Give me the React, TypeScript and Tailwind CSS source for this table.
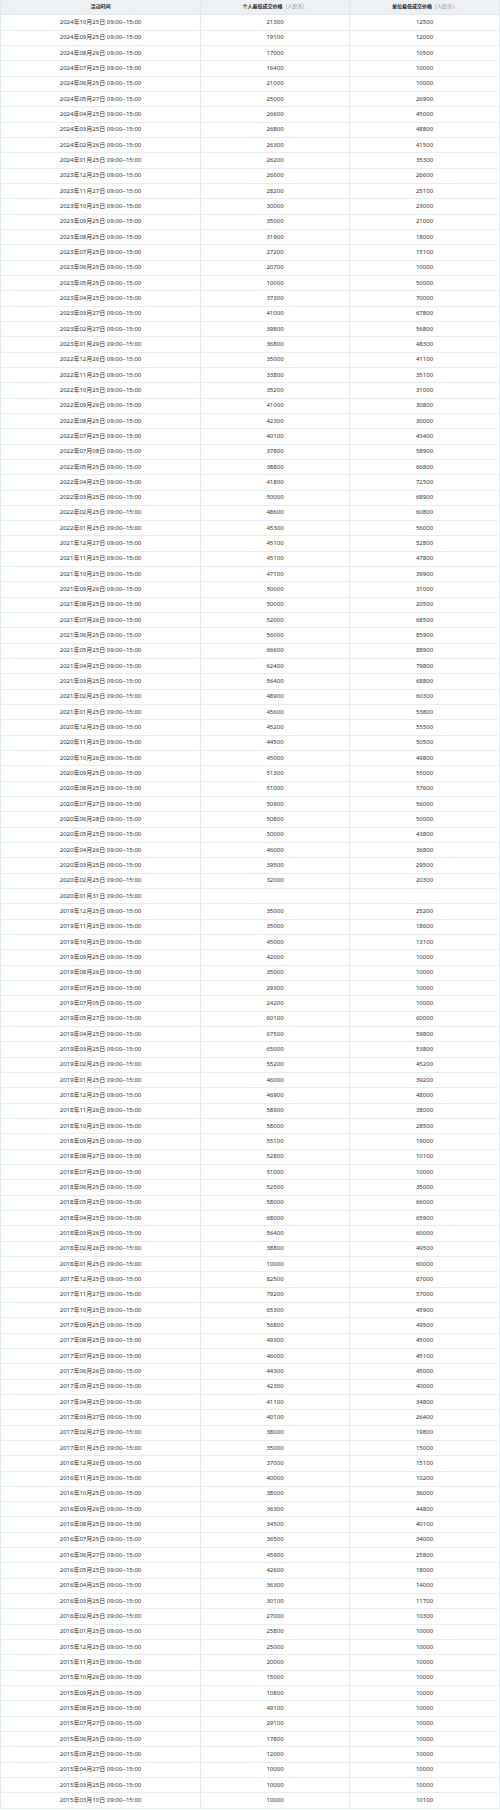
import React from 'react';

type Row = [string, string, string];

// 活动时间 / 个人 / 单位
const rows: Row[] = [
  ['2024年10月25日', '21300', '12500'],
  ['2024年09月25日', '19100', '12000'],
  ['2024年08月26日', '17000', '10500'],
  ['2024年07月25日', '16400', '10000'],
  ['2024年06月25日', '21000', '10000'],
  ['2024年05月27日', '25000', '26900'],
  ['2024年04月25日', '26600', '45000'],
  ['2024年03月25日', '26800', '48800'],
  ['2024年02月26日', '26300', '41500'],
  ['2024年01月25日', '26200', '35300'],
  ['2023年12月25日', '26600', '26600'],
  ['2023年11月27日', '28200', '25100'],
  ['2023年10月25日', '30000', '23000'],
  ['2023年09月25日', '35000', '21000'],
  ['2023年08月25日', '31900', '18000'],
  ['2023年07月25日', '27200', '15100'],
  ['2023年06月25日', '20700', '10000'],
  ['2023年05月25日', '10000', '50000'],
  ['2023年04月25日', '37300', '70000'],
  ['2023年03月27日', '41000', '67800'],
  ['2023年02月27日', '39800', '56800'],
  ['2023年01月29日', '36800', '48300'],
  ['2022年12月26日', '35000', '41100'],
  ['2022年11月25日', '33800', '35100'],
  ['2022年10月25日', '35200', '31000'],
  ['2022年09月26日', '41000', '30800'],
  ['2022年08月25日', '42300', '30000'],
  ['2022年07月25日', '40100', '43400'],
  ['2022年07月08日', '37800', '58900'],
  ['2022年05月25日', '38800', '66800'],
  ['2022年04月25日', '41800', '72500'],
  ['2022年03月25日', '50000', '68900'],
  ['2022年02月25日', '48600', '60800'],
  ['2022年01月25日', '45300', '56000'],
  ['2021年12月27日', '45100', '52800'],
  ['2021年11月25日', '45100', '47800'],
  ['2021年10月25日', '47100', '39900'],
  ['2021年09月26日', '50000', '31000'],
  ['2021年08月25日', '50000', '20500'],
  ['2021年07月26日', '52000', '68500'],
  ['2021年06月25日', '56000', '85900'],
  ['2021年05月25日', '66600', '88900'],
  ['2021年04月25日', '62400', '79800'],
  ['2021年03月25日', '56400', '68800'],
  ['2021年02月25日', '48900', '60300'],
  ['2021年01月25日', '45600', '53800'],
  ['2020年12月25日', '45200', '55500'],
  ['2020年11月25日', '44500', '50500'],
  ['2020年10月26日', '45000', '49800'],
  ['2020年09月25日', '51300', '55000'],
  ['2020年08月25日', '51000', '57600'],
  ['2020年07月27日', '50900', '56000'],
  ['2020年06月28日', '50800', '50000'],
  ['2020年05月25日', '50000', '43800'],
  ['2020年04月26日', '46000', '36800'],
  ['2020年03月25日', '39500', '29500'],
  ['2020年02月25日', '32000', '20300'],
  ['2020年01月31日', '', ''],
  ['2019年12月25日', '35000', '25200'],
  ['2019年11月25日', '35000', '18600'],
  ['2019年10月25日', '45000', '13100'],
  ['2019年09月25日', '42000', '10000'],
  ['2019年08月26日', '35000', '10000'],
  ['2019年07月25日', '29300', '10000'],
  ['2019年07月05日', '24200', '10000'],
  ['2019年05月27日', '60100', '60000'],
  ['2019年04月25日', '67500', '59800'],
  ['2019年03月25日', '65000', '53800'],
  ['2019年02月25日', '55200', '45200'],
  ['2019年01月25日', '46000', '39200'],
  ['2018年12月25日', '46900', '48000'],
  ['2018年11月26日', '58900', '38000'],
  ['2018年10月25日', '58000', '28500'],
  ['2018年09月25日', '55100', '19000'],
  ['2018年08月27日', '52800', '10100'],
  ['2018年07月25日', '51000', '10000'],
  ['2018年06月25日', '52500', '35000'],
  ['2018年05月25日', '58000', '66000'],
  ['2018年04月25日', '68000', '65900'],
  ['2018年03月26日', '56400', '60000'],
  ['2018年02月26日', '38800', '49500'],
  ['2018年01月25日', '10000', '60000'],
  ['2017年12月25日', '82500', '67000'],
  ['2017年11月27日', '79200', '57000'],
  ['2017年10月25日', '65300', '45900'],
  ['2017年09月25日', '56800', '49500'],
  ['2017年08月25日', '49300', '45000'],
  ['2017年07月25日', '46000', '45100'],
  ['2017年06月26日', '44300', '45000'],
  ['2017年05月25日', '42300', '40000'],
  ['2017年04月25日', '41100', '34800'],
  ['2017年03月27日', '40100', '26400'],
  ['2017年02月27日', '38000', '19800'],
  ['2017年01月25日', '35000', '15000'],
  ['2016年12月26日', '37000', '15100'],
  ['2016年11月25日', '40000', '10200'],
  ['2016年10月25日', '38000', '36000'],
  ['2016年09月26日', '36300', '44800'],
  ['2016年08月25日', '34500', '40100'],
  ['2016年07月25日', '36500', '34000'],
  ['2016年06月27日', '45900', '25800'],
  ['2016年05月25日', '42600', '18000'],
  ['2016年04月25日', '36300', '14000'],
  ['2016年03月25日', '30100', '11700'],
  ['2016年02月25日', '27000', '10300'],
  ['2016年01月25日', '25800', '10000'],
  ['2015年12月25日', '25000', '10000'],
  ['2015年11月25日', '20000', '10000'],
  ['2015年10月26日', '15000', '10000'],
  ['2015年09月25日', '10800', '10000'],
  ['2015年08月25日', '49100', '10000'],
  ['2015年07月27日', '29100', '10000'],
  ['2015年06月25日', '17800', '10000'],
  ['2015年05月25日', '12000', '10000'],
  ['2015年04月27日', '10000', '10000'],
  ['2015年03月25日', '10000', '10000'],
  ['2015年03月10日', '10000', '10100'],
];

const cell = 'flex items-center justify-center border-r border-[#dfe9f0]';

export default function App() {
  return (
    <div className="w-[500px] bg-white text-[#333] font-['Noto_Sans','Noto_Sans_CJK_SC',sans-serif]">
      {/* 表头 */}
      <div className="grid grid-cols-[201px_149px_1fr] h-[15.34px] bg-[#eef0f2] border-b border-[#dfe9f0] text-[5px] font-bold text-[#222]">
        <div className={`${cell} border-l`}>活动时间</div>
        <div className={cell}>
          个人最低成交价格<span className="font-normal text-[#888]">（人民币）</span>
        </div>
        <div className={cell}>
          单位最低成交价格<span className="font-normal text-[#888]">（人民币）</span>
        </div>
      </div>

      {rows.map(([date, personal, company], i) => (
        <div
          key={i}
          className="grid grid-cols-[201px_149px_1fr] h-[15.34px] border-b border-[#e6eef3] text-[6px]"
        >
          <div className={`${cell} border-l`}>{date} 09:00--15:00</div>
          <div className={cell}>{personal}</div>
          <div className={cell}>{company}</div>
        </div>
      ))}
    </div>
  );
}
